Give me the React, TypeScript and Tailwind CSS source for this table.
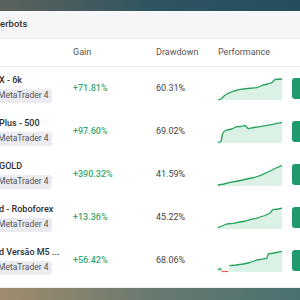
import React from "react"

type Row = {
  name: string
  gain: string
  drawdown: string
  line: string
  extra?: boolean
}

const rows: Row[] = [
  { name: "X - 6k", gain: "+71.81%", drawdown: "60.31%", line: "0,21 3,20 6,17 10,14.3 16,12 22,10.3 30,9.5 38.7,8.7 42,7.5 45,6 50,5 53.7,3.7 57,0.5 64,0" },
  { name: "Plus - 500", gain: "+97.60%", drawdown: "69.02%", line: "0,20.7 3,19.5 4.5,12 6,9.5 8.7,8 14,7 18.7,4.7 23,4.5 27,3.3 30.3,6.7 36,5.5 42,4.7 52,2.8 64,0.3" },
  { name: "GOLD", gain: "+390.32%", drawdown: "41.59%", line: "0,20 6,19 12,17.3 20,16 28.7,14 36,12.5 42,10.7 50,7 57,3.5 64,0.3" },
  { name: "d - Roboforex", gain: "+13.36%", drawdown: "45.22%", line: "0,19.3 4,18 8.7,16 15,15.3 22,14 28,13 32,11.7 38,10.3 42,9 47,7.5 52,5 54.7,1.7 60,1 64,0.2" },
  { name: "d Versão M5 ...", gain: "+56.42%", drawdown: "68.06%", line: "11.3,14.7 18,14 25.3,13 32,11.5 38.7,9 44,8.2 48.7,7.3 50.3,3 56,2 64,0.3", extra: true },
]

function Spark({ line, extra }: { line: string; extra?: boolean }) {
  const pts = line.split(" ")
  const first = pts[0].split(",")[0]
  const last = pts[pts.length - 1].split(",")[0]
  return (
    <svg width="64" height="21" viewBox="0 0 64 21" className="block overflow-visible">
      <polygon points={`${first},21 ${line} ${last},21`} fill="#dcf1e6" />
      <polyline points={line} fill="none" stroke="#25a35a" strokeWidth="1.3" strokeLinejoin="round" />
      {extra && (
        <>
          <polyline points="0,19 2,17.3 3.5,19.5" fill="none" stroke="#25a35a" strokeWidth="1.2" />
          <polyline points="3.7,20.5 10.3,20.5" fill="none" stroke="#e0604f" strokeWidth="1.2" />
        </>
      )}
    </svg>
  )
}

export default function App() {
  return (
    <div className="w-[300px] h-[300px] overflow-hidden bg-white font-['Roboto',sans-serif] flex flex-col">
      <div className="h-[11px] shrink-0 bg-gradient-to-r from-[#5b625d] via-[#2f5560] to-[#254d5d]" />
      <div className="h-[28px] shrink-0 bg-[#f6f6f9] border-b border-[#ebebf0] flex items-center overflow-hidden">
        <span className="-ml-[19px] text-[9.5px] font-medium text-[#333] whitespace-nowrap">Traderbots</span>
      </div>
      <div className="h-[28px] shrink-0 grid grid-cols-[73px_83px_62px_74px_1fr] items-center border-b border-[#ebebf0] text-[9px] text-[#555]">
        <div />
        <div>Gain</div>
        <div>Drawdown</div>
        <div>Performance</div>
        <div />
      </div>
      <div className="flex flex-col">
        {rows.map((r) => (
          <div key={r.name} className="h-[43px] grid grid-cols-[73px_83px_62px_74px_1fr] items-center">
            <div className="flex flex-col gap-[3px] overflow-hidden">
              <div className="-ml-[1px] text-[9px] leading-[11px] font-medium text-[#2e2e2e] whitespace-nowrap">{r.name}</div>
              <div className="-ml-[5px] self-start rounded-[3px] bg-[#ebebf0] px-[3px] h-[14px] flex items-center text-[8.5px] text-[#555] whitespace-nowrap">
                MetaTrader 4
              </div>
            </div>
            <div className="text-[9px] font-medium text-[#3aa86c]">{r.gain}</div>
            <div className="text-[9px] text-[#444]">{r.drawdown}</div>
            <div className="pt-[1px]">
              <Spark line={r.line} extra={r.extra} />
            </div>
            <div className="h-[21px] w-[20px] rounded-l-[3px] bg-[#1d9b6c]" />
          </div>
        ))}
      </div>
      <div className="flex-1 border-b border-[#eeeef4]" />
      <div className="h-[12px] shrink-0 bg-gradient-to-r from-[#a08b6c] via-[#697a70] to-[#4a7172]" />
    </div>
  )
}
